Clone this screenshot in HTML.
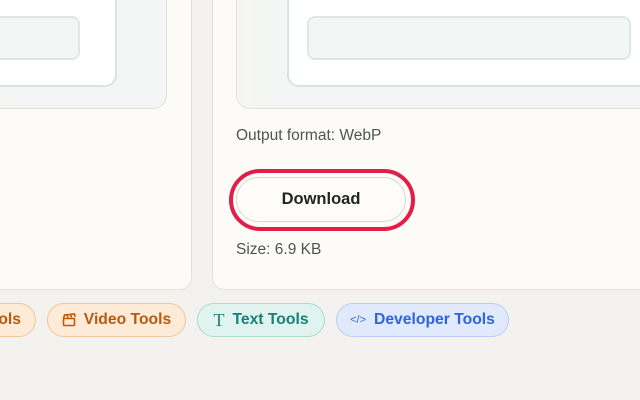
<!DOCTYPE html>
<html><head><style>
*{margin:0;padding:0;box-sizing:border-box}
body{width:640px;height:400px;background:#f4f2ee;position:relative;overflow:hidden;font-family:"Liberation Sans",sans-serif}
.card{position:absolute;background:#fcfbf7;border:1px solid #e4e1da;border-radius:12px}
.prev{position:absolute;background:linear-gradient(90deg,#f7f6f0,#f3f6f5 30px);border:1px solid #e0e0da;border-radius:14px}
.frame{position:absolute;background:#fff;border:2px solid #d9e3e0;border-radius:12px}
.bar{position:absolute;background:#f2f6f5;border:2px solid #dfe7e4;border-radius:8px}
.t{position:absolute;font-size:15.5px;color:#4c5652}
.pill{position:absolute;top:303px;height:34px;border-radius:17px;border:1px solid;font-weight:bold;font-size:15.7px;display:flex;align-items:center;justify-content:center;gap:8px}
</style></head><body>
<div class="card" style="left:-20px;top:-20px;width:212px;height:310px"></div>
<div class="card" style="left:212px;top:-20px;width:450px;height:310px"></div>
<div class="prev" style="left:-20px;top:-20px;width:187px;height:129px"></div>
<div class="frame" style="left:-20px;top:-20px;width:137px;height:107px"></div>
<div class="bar" style="left:-20px;top:16px;width:100px;height:44px"></div>
<div class="prev" style="left:236px;top:-20px;width:420px;height:129px"></div>
<div class="frame" style="left:287px;top:-20px;width:370px;height:107px"></div>
<div class="bar" style="left:307px;top:16px;width:324px;height:44px"></div>
<div class="t" style="left:236px;top:127px">Output format: WebP</div>
<div style="position:absolute;left:229px;top:169px;width:186px;height:62px;border:4px solid #e11d48;border-radius:31px"></div>
<div style="position:absolute;left:236px;top:177px;width:170px;height:45px;border:1px solid #dcd8cf;border-radius:23px;background:#fdfcf8;display:flex;align-items:center;justify-content:center;font-weight:bold;font-size:16.5px;color:#1f2523">Download</div>
<div class="t" style="left:236px;top:241px">Size: 6.9 KB</div>
<div class="pill" style="left:-60px;width:96px;background:#fdebd8;border-color:#efc59a;color:#b95a10;justify-content:flex-end;padding-right:14px">ols</div>
<div class="pill" style="left:47px;width:139px;background:#fdebd8;border-color:#efc59a;color:#b95a10"><svg width="14" height="14" viewBox="0 0 14 14" fill="none" stroke="#b95a10" stroke-width="1.6"><rect x="1.5" y="5.5" width="11" height="7" rx="1"/><path d="M1.5 5.5l1-3.5 10-1 .5 3"/><path d="M5 1.7l1 3M8.5 1.3l1 3.2"/></svg>Video Tools</div>
<div class="pill" style="left:197px;width:128px;background:#e0f3ef;border-color:#a8dcd2;color:#178077"><span style="font-family:'Liberation Serif',serif;font-weight:normal;font-size:18px">T</span>Text Tools</div>
<div class="pill" style="left:336px;width:173px;background:#e1eafd;border-color:#b9cdf7;color:#2f63e0"><span style="font-size:11px;font-weight:normal">&lt;/&gt;</span>Developer Tools</div>
</body></html>
